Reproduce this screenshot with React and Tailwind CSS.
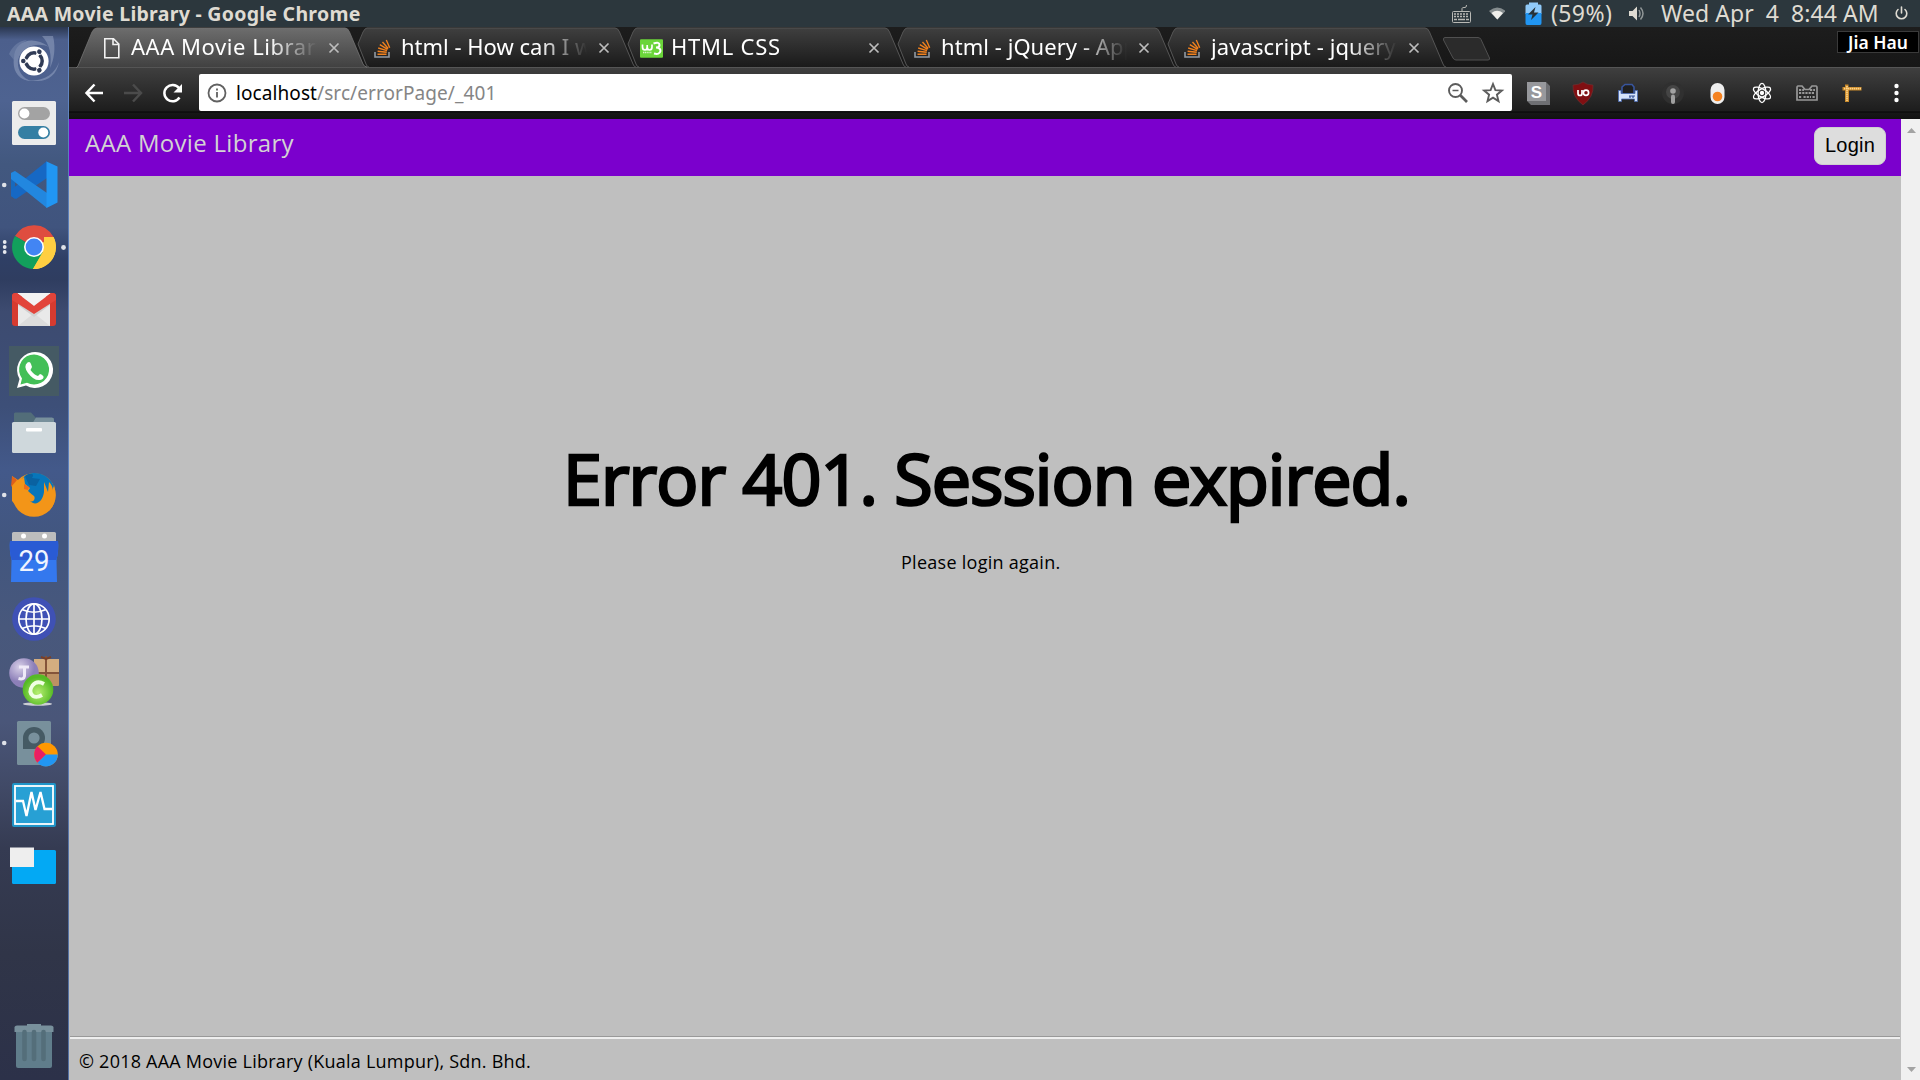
import React from "react";

const DOCK_HEIGHT = 62;

function DockIcon({ top, dots = 0, active = false, height = DOCK_HEIGHT, children }) {
  return (
    <svg className="block w-[69px] shrink-0" viewBox={`0 ${top} 69 ${height}`} style={{ height }}>
      {dots === 1 && <circle cx="4.2" cy={top + 31} r="2.3" fill="#dfe2e8" />}
      {dots === 3 &&
        [-5, 0, 5].map((d) => <circle key={d} cx="4.7" cy={top + 31 + d} r="1.9" fill="#e6e8ee" />)}
      {active && <circle cx="63.5" cy={top + 31.5} r="2.4" fill="#dfe2e8" />}
      {children}
    </svg>
  );
}

function Dock() {
  return (
    <aside className="flex w-[69px] shrink-0 flex-col bg-[linear-gradient(180deg,#2a3750_0%,#4c5f8c_1.2%,#4e6391_7%,#42587f_13%,#40547e_19%,#2f3f65_22%,#2f3d60_24%,#3d4b70_27%,#3d4f78_36%,#43598a_42%,#42567f_49%,#48587c_57%,#4a5679_66%,#414a67_72%,#353b52_78%,#303548_88%,#2c3149_100%)] pt-[3px] shadow-[inset_-1px_0_0_rgba(110,155,225,0.6)]">
      <DockIcon top={30}>
        <g fill="#aebbd5" opacity=".4">
          <path d="M14 58C14 42 32 34 49 47C39 42 22 45 18 60C17 70 22 78 31 81C18 80 12 70 14 58Z" />
          <path d="M53 36C56 48 54 60 50 68C52 56 50 44 42 36Z" />
          <path d="M18 76C34 86 54 78 59 62C57 75 47 82 36 81C28 81 22 79 18 76Z" />
          <path d="M9 54C13 45 19 41 27 40C19 45 15 52 14 60Z" opacity=".6" />
        </g>
        <circle cx="34" cy="61" r="14.6" fill="#fff" />
        <circle cx="34" cy="61" r="8.2" fill="none" stroke="#303b55" strokeWidth="3.5" />
        {[0, 120, 240].map((a) => (
          <g key={a} transform={`rotate(${a} 34 61)`}>
            <path d="M22 61H28" stroke="#fff" strokeWidth="3" />
            <circle cx="23.3" cy="61" r="3" fill="#fff" />
            <circle cx="23.3" cy="61" r="2.3" fill="#303b55" />
          </g>
        ))}
      </DockIcon>
      <DockIcon top={92}>
        <rect x="12" y="101" width="44" height="44" rx="1.5" fill="#ececec" />
        <rect x="18" y="107" width="32" height="13" rx="6.5" fill="#a3a3a3" />
        <circle cx="24.4" cy="113.5" r="5" fill="#fff" />
        <rect x="18" y="126" width="32" height="13" rx="6.5" fill="#357fa3" />
        <circle cx="43.3" cy="132.5" r="5" fill="#fff" />
      </DockIcon>
      <DockIcon top={154} dots={1}>
        <path d="M11 173L15 171V199L11 196Z" fill="#1769bd" />
        <path d="M11 196V190L47 161V178L16 199Z" fill="#1668c4" />
        <path d="M11 173L15 171L47 193V208L11 179Z" fill="#2287df" />
        <path d="M46.500 161.500L57.500 166.500V202.500L46.500 208Z" fill="#2196f3" />
      </DockIcon>
      <DockIcon top={216} dots={3} active>
        <path d="M34 247L15 236A22 22 0 0 1 53.500 237Z" fill="#df4d3f" />
        <path d="M34 247L53.500 237A22 22 0 0 1 33 269Z" fill="#ffcf42" />
        <path d="M34 247L33 269A22 22 0 0 1 15 236Z" fill="#12a05c" />
        <path d="M34 237H53.500L50 236.500Z" fill="#df4d3f" />
        <path d="M24 252L33 269L43 252Z" fill="#12a05c" />
        <path d="M33 269L44 250V237H53.500A22 22 0 0 1 33 269Z" fill="#ffcf42" />
        <circle cx="34" cy="247" r="10" fill="#fff" />
        <circle cx="34" cy="247" r="8.4" fill="#4285f4" />
      </DockIcon>
      <DockIcon top={278}>
        <rect x="12" y="293" width="44" height="33" rx="3" fill="#d63b30" />
        <path d="M18 297H50V326H18Z" fill="#e9e9e9" />
        <path d="M18 326L34 313L50 326Z" fill="#dcdcdc" />
        <path d="M18 305L34 317L50 305V300H18Z" fill="#d0d0d0" />
        <path d="M17 293H51L34 306Z" fill="#f3f3f3" />
        <path d="M12 295Q13 292.500 17 293L34 306L51 293Q55 292.500 56 295V300L34 314L12 300Z" fill="#e2443a" />
      </DockIcon>
      <DockIcon top={340}>
        <rect x="9" y="346" width="50" height="50" fill="#455a64" />
        <path d="M17 388L19.500 379A18 18 0 1 1 26 385.500Z" fill="#fff" />
        <path d="M20.500 384.500L22 378.500A15 15 0 1 1 27 382.800Z" fill="#43bf57" />
        <path d="M27.500 362.500Q30 361 31 364L32 367Q31 369 30.500 370Q34 375 38 376L40 374Q42 374 43.500 376.500Q44 379 40 380Q34 381 28 373Q23 366 27.500 362.500Z" fill="#fff" />
      </DockIcon>
      <DockIcon top={402}>
        <path d="M14 414Q14 412 16 412.500H31L36 418H54V426H14Z" fill="#526d79" />
        <path d="M36 417.500H52Q54 417.500 54 420V424H32Z" fill="#78909c" />
        <rect x="12" y="422" width="44" height="31" rx="1.500" fill="#cfd8dc" />
        <rect x="26" y="428" width="16" height="3.500" rx="1" fill="#fff" />
      </DockIcon>
      <DockIcon top={464} dots={1}>
        <circle cx="34" cy="495" r="21.8" fill="#f39518" />
        <path d="M21 480C28 470 46 470 54 486L47 502C45 510 32 510 28 500C33 504 36 499 34 496L26 490Z" fill="#0876ba" />
        <path d="M25 476C31 472 35 474 32 478L40 479L36 486L29 485Z" fill="#0a62a1" />
        <path d="M12 476L18 480Q21 480 24 477L25 484L30 488L28 491L31 494Q26 496 30 501C36 507 43 501 44 492L44 482L48 492L49 482C53 486 53 490 53 494L54 485C57 498 55 507 47 512L22 512L12 501Z" fill="#f39518" />
        <path d="M12 476L17 480L11 487Z" fill="#df6019" />
        <path d="M24 484L29 487L28 490L24 489Z" fill="#ed6b1d" />
      </DockIcon>
      <DockIcon top={526}>
        <rect x="12" y="532" width="44" height="10" rx="1.500" fill="#bdbdbd" />
        <circle cx="23.500" cy="536" r="2.500" fill="#fff" />
        <circle cx="44.500" cy="536" r="2.500" fill="#fff" />
        <path d="M10 541H58Q59 549 56.500 560L57 582H11L11.500 560Q9 549 10 541Z" fill="#3478ee" />
        <path d="M10 541H58Q59 549 56.500 560H11.500Q9 549 10 541Z" fill="#2a5bd4" />
        <text x="34" y="571" textAnchor="middle" fill="#f1f5ff" fontSize="30" textLength="31" lengthAdjust="spacingAndGlyphs" fontFamily="Roboto, sans-serif">29</text>
      </DockIcon>
      <DockIcon top={588}>
        <circle cx="34" cy="619" r="21.800" fill="#3f51b5" />
        <g fill="none" stroke="#fff" strokeWidth="1.700">
          <circle cx="34" cy="619" r="15.200" />
          <ellipse cx="34" cy="619" rx="8" ry="15.200" />
          <path d="M34 604V634M19 619H49M22 609.500Q34 615 46 609.500M22 628.500Q34 623 46 628.500" />
        </g>
      </DockIcon>
      <DockIcon top={650}>
        <defs>
          <radialGradient id="purpleBall" cx=".35" cy=".3"><stop stopColor="#d8d0e8" /><stop offset="1" stopColor="#8c7fb8" /></radialGradient>
          <radialGradient id="greenBall" cx=".5" cy=".6"><stop stopColor="#b7ef70" /><stop offset="1" stopColor="#55ba25" /></radialGradient>
        </defs>
        <rect x="34" y="659" width="25" height="27" rx="1" fill="#bd9164" />
        <path d="M34 659H59V672H34Z" fill="#d3ad80" />
        <path d="M46 656V686M34 673H59" stroke="#84543a" strokeWidth="2" />
        <path d="M41 657L46 659L51 657" fill="none" stroke="#793f28" strokeWidth="2" />
        <circle cx="24" cy="673" r="14.800" fill="url(#purpleBall)" />
        <path d="M19 667H29M24.500 667V676Q24 680 18.500 678.500" fill="none" stroke="#efeaf8" strokeWidth="3" />
        <ellipse cx="37.500" cy="704" rx="14.500" ry="1.700" fill="#cbcdd4" />
        <circle cx="38" cy="689.500" r="15.300" fill="url(#greenBall)" />
        <path d="M44 684Q37 680 32.500 685.500Q28 692 33 696Q37 698 42 695" fill="none" stroke="#f0ffe2" strokeWidth="3.800" />
      </DockIcon>
      <DockIcon top={712} dots={1}>
        <rect x="17" y="721" width="34" height="44" rx="1.500" fill="#78909c" />
        <path d="M23 749V738A11 11 0 1 1 34 749Z" fill="#455a64" />
        <circle cx="34" cy="738" r="5.600" fill="#78909c" />
        <circle cx="46" cy="754.500" r="11.800" fill="#ff9800" />
        <path d="M46 754.500L37.500 746.300A11.800 11.800 0 0 0 37.500 762.700Z" fill="#e91e63" />
        <path d="M46 754.500H57.800A11.800 11.800 0 0 1 37.500 762.700Z" fill="#2196f3" />
      </DockIcon>
      <DockIcon top={774}>
        <rect x="12" y="783" width="44" height="44" rx="2" fill="#2095c8" />
        <rect x="15" y="786" width="38" height="38" fill="#27a0d4" stroke="#fff" strokeWidth="1.800" />
        <path d="M16 801H23L26.500 816L31.500 792L35.500 810L40.500 792L44.500 809H52" fill="none" stroke="#fff" strokeWidth="2.300" />
      </DockIcon>
      <DockIcon top={836}>
        <rect x="12" y="850" width="44" height="34" rx="1.500" fill="#03a9f4" />
        <rect x="10" y="847.500" width="24" height="19.500" fill="#eee" />
      </DockIcon>
      <div className="flex-1" />
      <DockIcon top={1014}>
        <path d="M27 1024H41V1027H27Z" fill="#78909c" />
        <path d="M16 1030H52V1066Q52 1068 50 1068H18Q16 1068 16 1066Z" fill="#607d8b" />
        <path d="M14.500 1027Q15 1025.500 17 1025.500H51Q53 1025.500 53.500 1027V1032H14.500Z" fill="#78909c" />
        <path d="M24.500 1032V1059M34 1032V1059M43.500 1032V1059" stroke="#546e7a" strokeWidth="4.600" strokeLinecap="round" />
      </DockIcon>
      <div className="h-1" />
    </aside>
  );
}

function SystemBar() {
  return (
    <div className="flex h-[27px] shrink-0 items-center justify-between bg-[#2c373d] font-['Noto_Sans','Open_Sans',sans-serif] text-[#dfdbd2]">
      <div className="whitespace-nowrap pl-[7px] text-[19.500px] leading-[27px] font-bold tracking-[0.280px]">AAA Movie Library - Google Chrome</div>
      <div className="flex h-[27px] items-center">
        <svg className="mr-[16px] h-[27px] w-[22px]" viewBox="1451 0 22 27" fill="none" stroke="#b9b9b5">
          <path d="M1462 11V8.500Q1462 7.500 1464 7.500H1465Q1466.500 7.500 1466.500 5" />
          <rect x="1452.500" y="11.500" width="18" height="11" rx="1" />
          <path d="M1454 14H1469M1454 16.500H1469" strokeWidth="1.600" strokeDasharray="2 1" />
          <path d="M1454 19.500H1457M1458 19.500H1465M1466 19.500H1469" strokeWidth="1.600" />
        </svg>
        <svg className="mr-[20px] h-[27px] w-[16px]" viewBox="1489 0 16 27">
          <path d="M1489 11Q1497 4 1505.500 11L1497.300 19.500Z" fill="#858c8e" />
          <path d="M1491.500 13Q1497 8.500 1503 13L1497.300 19.500Z" fill="#f0efeb" />
        </svg>
        <svg className="mr-[8px] h-[27px] w-[18px]" viewBox="1525 0 18 27">
          <path d="M1525.500 6Q1525.500 4.500 1527 4.500H1529V2.500H1538V4.500H1540Q1541.500 4.500 1541.500 6V14H1525.500Z" fill="#90caf9" />
          <path d="M1525.500 13H1541.500V23Q1541.500 25 1540 25H1527Q1525.500 25 1525.500 23Z" fill="#2196f3" />
          <path d="M1535.500 7L1528 14.500H1532.500L1531 20L1538.500 12.500H1534Z" fill="#263238" />
        </svg>
        <span className="w-[77px] whitespace-nowrap text-[23px] leading-[27px] tracking-[0.400px]">(59%)</span>
        <svg className="mr-[16px] h-[27px] w-[17px]" viewBox="1628 0 17 27">
          <path d="M1629 11H1632.500L1637 6.500V20.500L1632.500 16H1629Z" fill="#dfdbd2" />
          <path d="M1639 10Q1641 13.500 1639 17M1640.500 7.500Q1645.500 13.500 1640.500 19.500" fill="none" stroke="#8f9596" strokeWidth="1.500" />
        </svg>
        <span className="w-[234px] whitespace-pre text-[23px] leading-[27px] tracking-[0.050px]">{"Wed Apr  4  8:44 AM"}</span>
        <svg className="mr-[12px] h-[27px] w-[13px]" viewBox="1895 0 13 27" fill="none" stroke="#dfdbd2" strokeWidth="1.600" strokeLinecap="round">
          <path d="M1898 9.500A5.300 5.300 0 1 0 1905 9.500M1901.500 7V13" />
        </svg>
      </div>
    </div>
  );
}

function PageFavicon() {
  return (
    <svg className="h-6 w-6" viewBox="0 0 24 24" fill="none" stroke="#f1f1f1" strokeWidth="1.600">
      <path d="M4.800 2.800H13.500L18.800 8V21.800H4.800ZM13 3V8.500H18.500" />
    </svg>
  );
}

function StackFavicon() {
  return (
    <svg className="h-6 w-6" viewBox="0 0 24 24" fill="none">
      <path d="M5 16V21H19V16" stroke="#9199a2" strokeWidth="1.600" />
      <g stroke="#f2811d" strokeWidth="1.400">
        <path d="M7.500 18.300H16.500M7.600 15.200L16.700 16.300M8.200 12L17 14.600M9.800 8.700L17.600 13.400M12.500 6L18.200 12.500M16.300 4L19.700 11.700" />
      </g>
    </svg>
  );
}

function W3Favicon() {
  return (
    <svg className="h-6 w-6" viewBox="0 0 24 24">
      <rect x="0" y="3.300" width="23" height="18.500" rx="1" fill="#6bd53a" />
      <path d="M2.500 8.500V11Q2.500 14 5 14Q7.200 14 7.200 11V9M7.200 11Q7.200 14 9.500 14Q12 14 12 11V8.500" fill="none" stroke="#fff" strokeWidth="1.700" />
      <path d="M13.500 7.500Q19.500 5.500 19.500 9Q19.500 11.500 16 11.500Q20.500 11.500 20.500 15Q19.500 19 14 17.500" fill="none" stroke="#fff" strokeWidth="2" />
      <path d="M3 16.500H12" stroke="#d8f5c8" strokeWidth="1.500" strokeDasharray="1.200 .6" />
    </svg>
  );
}

const TABS = [
  { title: "AAA Movie Library", Icon: PageFavicon, active: true, spacing: "tracking-[0.550px]" },
  { title: "html - How can I w", Icon: StackFavicon, spacing: "tracking-[0px]" },
  { title: "HTML CSS", Icon: W3Favicon, spacing: "tracking-[0.750px]" },
  { title: "html - jQuery - App", Icon: StackFavicon, spacing: "tracking-[0.050px]" },
  { title: "javascript - jquery", Icon: StackFavicon, spacing: "tracking-[0.100px]" },
];

function Tab({ title, Icon, active, spacing }) {
  return (
    <div className={active ? "relative z-10 h-[40px] w-[270px] shrink-0" : "relative h-[40px] w-[270px] shrink-0"}>
      <svg className="absolute top-0 -left-[1px] h-[41px] w-[292px]" viewBox="-1 0 292 41">
        <defs>
          <linearGradient id={active ? "tabOn" : "tabOff"} x1="0" y1="0" x2="0" y2="1">
            <stop stopColor={active ? "#6d6d6d" : "#3f3f3f"} />
            <stop offset="1" stopColor={active ? "#404040" : "#1a1a1a"} />
          </linearGradient>
        </defs>
        {active ? (
          <path d="M0 41L2 39L16 5Q18 1 21 1H269Q272 1 273.500 5L287 37Q288.500 40 291 40V41Z" fill="url(#tabOn)" stroke="#747474" strokeWidth=".8" />
        ) : (
          <path d="M12 17L17 5Q19 1 21 1H269Q272 1 273.500 5L287 37Q288 40 290 40H20Z" fill="url(#tabOff)" />
        )}
        {!active && <path d="M12 17L17 5Q19 1 21 1H269Q272 1 273.500 5L287 37Q288 40 290 40M12 17L20 37Q21 40 23 40" fill="none" stroke="#555" />}
      </svg>
      <div className="relative flex h-[40px] items-center pl-[24px]">
        <div className="mt-[2px] mr-[7px] h-6 w-6"><Icon /></div>
        <div className="mb-[2px] w-[186px] overflow-hidden whitespace-nowrap [mask-image:linear-gradient(to_right,black_138px,transparent_186px)]">
          <span className={`font-['Noto_Sans','Open_Sans',sans-serif] text-[22px] leading-[38px] text-white ${spacing}`}>{title}</span>
        </div>
        <svg className="mt-[2px] ml-[11px] h-3 w-3 shrink-0" viewBox="0 0 12 12" stroke="#bdbdbd" strokeWidth="1.700"><path d="M1.500 1.500L10.500 10.500M10.500 1.500L1.500 10.500" /></svg>
      </div>
    </div>
  );
}

function TabStrip() {
  return (
    <div className="flex h-[40px] shrink-0 bg-[linear-gradient(180deg,#1d1d1d,#171717)] pl-[7px]">
      {TABS.map((t) => <Tab key={t.title} {...t} />)}
      <svg className="mt-[9px] ml-[16px] h-[26px] w-[50px]" viewBox="0 0 50 26">
        <path d="M1.500 4Q1 1.500 3 1.500H36Q38 1.500 39 3.500L47.500 22Q48 24 46 24H14Q12 24 11 22Z" fill="#2b2b2b" stroke="#505050" />
      </svg>
      <div className="mt-[4px] mr-[1px] ml-auto h-[22px] w-[82px] border border-[#3a3a3a] bg-black text-center font-['Noto_Sans','Open_Sans',sans-serif] text-[17.500px] leading-[21px] font-semibold whitespace-nowrap text-white">Jia Hau</div>
    </div>
  );
}

function Extensions() {
  return (
    <>
      <svg className="h-[26px] w-[26px]" viewBox="0 0 26 26">
        <path d="M2 2H21L25 6V25H6L2 21Z" fill="#6e6f73" /><rect x="2" y="2" width="19" height="19" fill="#97989c" />
        <text x="11.500" y="17.500" textAnchor="middle" fontFamily="Liberation Sans" fontWeight="bold" fontSize="17" fill="#fff">S</text>
      </svg>
      <svg className="h-[26px] w-[26px]" viewBox="0 0 26 26">
        <path d="M13 2Q17 5 23 5Q24 17 13 25Q2 17 3 5Q9 5 13 2Z" fill="#800f12" stroke="#713434" strokeWidth=".6" />
        <path d="M8 10V13.500Q8 15.500 10 15.500Q12 15.500 12 13.500V10" stroke="#fff" strokeWidth="1.700" fill="none" /><circle cx="16" cy="12.800" r="2.600" stroke="#fff" strokeWidth="1.700" fill="none" />
      </svg>
      <svg className="h-[26px] w-[26px]" viewBox="0 0 26 26">
        <path d="M7 13V7L10 4.500H17L19 7V13" fill="#202020" stroke="#38559d" strokeWidth="1.600" />
        <path d="M3.500 10.500H6V13.500H20V10.500H22.500V21.500H19.500V19H6.500V21.500H3.500Z" fill="#d5e3fa" stroke="#4969b4" strokeWidth=".8" />
        <path d="M14 16H20M15 18V16M18 18V16" stroke="#334f94" strokeWidth="1.200" />
      </svg>
      <svg className="h-[26px] w-[26px]" viewBox="0 0 26 26">
        <circle cx="13" cy="13" r="11" fill="#303030" /><circle cx="13" cy="12" r="7" fill="#454545" />
        <circle cx="13" cy="11" r="2.800" fill="#a2a2a2" /><path d="M13 16.500V22" stroke="#a0a0a0" strokeWidth="4" strokeLinecap="round" />
      </svg>
      <svg className="h-[26px] w-[26px]" viewBox="0 0 26 26"><rect x="5.500" y="3" width="14" height="21" rx="7" fill="#eee" /><circle cx="12.500" cy="16.500" r="4.800" fill="#f58220" /></svg>
      <svg className="h-[26px] w-[26px]" viewBox="0 0 26 26" fill="none" stroke="#fff" strokeWidth="1.300">
        {[30, 90, 150].map((a) => <ellipse key={a} cx="13" cy="13" rx="9.700" ry="3.900" transform={`rotate(${a} 13 13)`} />)}
        <circle cx="13" cy="13" r="1.500" fill="#fff" />
      </svg>
      <svg className="h-[26px] w-[26px]" viewBox="0 0 26 26" fill="none" stroke="#989898">
        <path d="M4 6H8L11 9.500H15L18 6H22Q23 6 23 8V20H3V8Q3 6 4 6Z" strokeWidth="1.700" />
        <path d="M5 10H10M16 10H21M5 13H21M5 17H8M9.500 17H17M18.500 17H21" strokeWidth="2" strokeDasharray="2.200 1" />
      </svg>
      <svg className="h-[26px] w-[26px]" viewBox="0 0 26 26">
        <path d="M6 4.500H9.500V7H22.500V10.500H10V22H6V10.500H3.500V7H6Z" fill="#c98a2b" /><path d="M5 8.700H22M8 6V21" stroke="#ffd48a" strokeWidth="1.700" strokeDasharray="1.400 .6" />
      </svg>
      <svg className="h-[26px] w-[26px]" viewBox="0 0 26 26" fill="#fff"><circle cx="12.500" cy="6" r="2.200" /><circle cx="12.500" cy="13" r="2.200" /><circle cx="12.500" cy="20" r="2.200" /></svg>
    </>
  );
}

function Toolbar() {
  return (
    <div className="flex h-[52px] shrink-0 items-start border-t border-[#555] bg-[linear-gradient(180deg,#3f3f3f_0px,#1d1d1d_43px,#050505_44px,#171717_45px,#101010_52px)] pt-[6px]">
      <svg className="h-[38px] w-[130px] shrink-0" viewBox="69 74 130 38" fill="none" strokeWidth="2.500">
        <path d="M103 93H87M94.500 84.500L86.500 93L94.500 101.500" stroke="#fff" />
        <path d="M124 93H140M133 84.500L141 93L133 101.500" stroke="#4b4b4b" />
        <path d="M179.500 97.500A8.200 8.200 0 1 1 179 88" stroke="#fff" />
        <path d="M182 84V92.500H173.500Z" fill="#fff" />
      </svg>
      <div className="flex h-[37px] w-[1313px] shrink-0 items-center rounded-[2px] bg-white pl-[8px]">
        <svg className="h-5 w-5" viewBox="0 0 20 20" fill="none" stroke="#616161" strokeWidth="1.800"><circle cx="10" cy="10" r="8.500" /><path d="M10 9V14.500M10 5.500V7.500" /></svg>
        <span className="mt-[1px] ml-[9px] font-['Noto_Sans','Open_Sans',sans-serif] text-[19px] leading-[37px] tracking-[0.080px] whitespace-nowrap text-[#858585]"><span className="text-black">localhost</span>/src/errorPage/_401</span>
        <svg className="ml-auto h-6 w-6" viewBox="0 0 24 24" fill="none" stroke="#5c5c5c" strokeWidth="1.900"><circle cx="9.500" cy="9.500" r="6.500" /><path d="M14.300 14.300L21 21" strokeWidth="2.700" /><path d="M6.500 9.500H12.500" strokeWidth="1.500" /></svg>
        <svg className="mr-[7px] ml-[11px] h-6 w-6" viewBox="0 0 24 24" fill="none" stroke="#5c5c5c" strokeWidth="1.900"><path d="M12 3L14.400 9.100L20.900 9.500L15.900 13.700L17.500 20.100L12 16.600L6.500 20.100L8.100 13.700L3.100 9.500L9.600 9.100Z" /></svg>
      </div>
      <div className="ml-[13px] flex h-[38px] shrink-0 items-center gap-[18.900px]"><Extensions /></div>
    </div>
  );
}

function ErrorPage() {
  return (
    <div className="flex min-h-0 flex-1">
      <div className="flex w-[1832px] flex-col bg-[#bfbfbf] font-['Open_Sans','Noto_Sans',sans-serif] text-black">
        <header className="flex h-[57px] shrink-0 items-start justify-between bg-[#7b00cd] pt-[8px] pr-[15px] pl-[16px]">
          <span className="-mt-px text-[24px] leading-[33px] tracking-[0.300px] text-[#d3d3d3]">AAA Movie Library</span>
          <button className="h-[38px] w-[72px] rounded-[8px] border border-[#cfcfcf] bg-[#dddddd] pb-[2px] font-['Liberation_Sans',Arial,sans-serif] text-[20px] leading-[34px] tracking-[0.200px]">Login</button>
        </header>
        <main className="flex flex-1 flex-col pt-[253px]">
          <h1 className="pl-[494px] text-[70px] leading-[98px] font-normal tracking-[-0.950px] whitespace-nowrap [-webkit-text-stroke:2.700px_black]">Error 401. Session expired.</h1>
          <p className="mt-[22px] pl-[832px] text-[18px] leading-[27px] tracking-[0.270px]">Please login again.</p>
        </main>
        <footer className="mx-px h-[44px] shrink-0 border-t border-[#999]">
          <div className="border-t-2 border-[#eee] pt-[9px] pl-[9px] text-[18px] leading-[27px] tracking-[0.230px]">© 2018 AAA Movie Library (Kuala Lumpur), Sdn. Bhd.</div>
        </footer>
      </div>
      <div className="flex w-[19px] flex-col items-center justify-between bg-[#f0f0f0] pt-[9px] pb-[8px] pl-[2px]">
        <svg className="h-[5px] w-[9px]" viewBox="0 0 9 5"><path d="M0 5L4.500 0L9 5Z" fill="#a3a3a3" /></svg>
        <svg className="h-[5px] w-[9px]" viewBox="0 0 9 5"><path d="M0 0L4.500 5L9 0Z" fill="#a3a3a3" /></svg>
      </div>
    </div>
  );
}

export default function App() {
  return (
    <div className="flex h-[1080px] w-[1920px] flex-col overflow-hidden bg-[#202020]">
      <SystemBar />
      <div className="flex min-h-0 flex-1">
        <Dock />
        <div className="flex min-w-0 flex-1 flex-col">
          <TabStrip />
          <Toolbar />
          <ErrorPage />
        </div>
      </div>
    </div>
  );
}
